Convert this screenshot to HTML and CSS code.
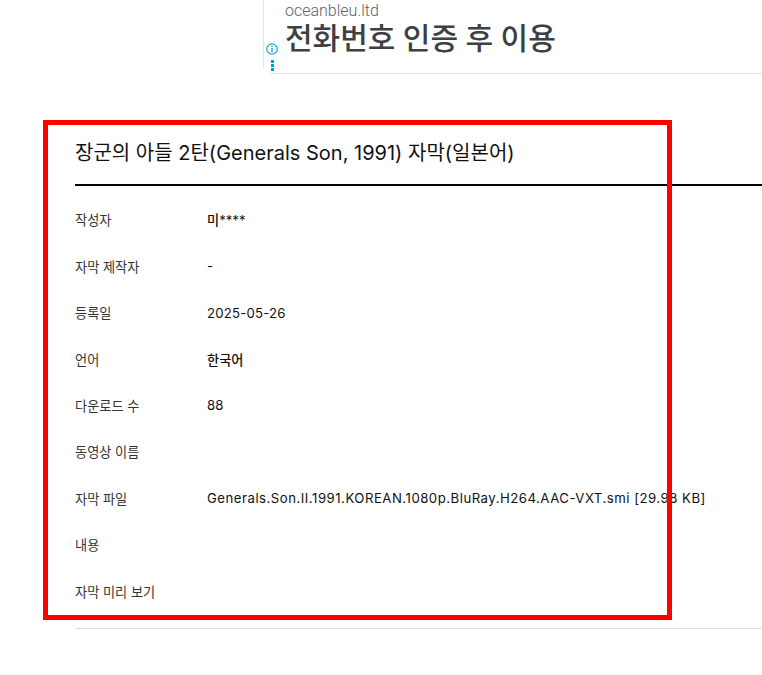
FILE: index.html
```html
<!DOCTYPE html>
<html lang="ko">

<head>
  <meta charset="UTF-8">
  <meta name="viewport" content="width=device-width, initial-scale=1.0">
  <title>자막</title>
  <link rel="stylesheet" href="styles.css">
</head>

<body>
  <!-- 광고 -->
  <div class="ad">
    <div class="ad-side">
      <svg class="ad-info" width="12" height="12" viewBox="0 0 12 12">
        <circle cx="6" cy="6" r="5.2" fill="none" stroke="#00aecd" stroke-width="1.2"/>
        <rect x="5.3" y="5" width="1.4" height="4" fill="#00aecd"/>
        <rect x="5.3" y="2.7" width="1.4" height="1.3" fill="#00aecd"/>
      </svg>
      <div class="ad-dots"><i></i><i></i><i></i></div>
    </div>
    <div class="ad-text">
      <div class="ad-domain">oceanbleu.ltd</div>
      <div class="ad-title">전화번호 인증 후 이용</div>
    </div>
  </div>

  <!-- 자막 정보 -->
  <div class="detail">
    <h1 class="detail-title">장군의 아들 2탄(Generals Son, 1991) 자막(일본어)</h1>
    <div class="rows">
      <div class="row"><div class="label">작성자</div><div class="value"><span class="medium">미</span>****</div></div>
      <div class="row"><div class="label">자막 제작자</div><div class="value">-</div></div>
      <div class="row"><div class="label">등록일</div><div class="value date">2025-05-26</div></div>
      <div class="row"><div class="label">언어</div><div class="value medium">한국어</div></div>
      <div class="row"><div class="label">다운로드 수</div><div class="value">88</div></div>
      <div class="row"><div class="label">동영상 이름</div><div class="value"></div></div>
      <div class="row"><div class="label">자막 파일</div><div class="value file">Generals.Son.II.1991.KOREAN.1080p.BluRay.H264.AAC-VXT.smi [29.98 KB]</div></div>
      <div class="row"><div class="label">내용</div><div class="value"></div></div>
      <div class="row"><div class="label">자막 미리 보기</div><div class="value"></div></div>
    </div>
  </div>

  <div class="highlight"></div>
</body>

</html>
```

FILE: styles.css
```css
html,
body {
  margin: 0;
  padding: 0;
  overflow: hidden;
  height: 675px;
  background-color: #fff;
}

body {
  font-family: Inter, "Noto Sans CJK KR", sans-serif;
  color: #222;
}

.ad {
  display: flex;
  height: 74px;
  margin-left: 263px;
}

.ad-side {
  flex: none;
  width: 7px;
  height: 68px;
  border-left: 1px solid #e4e4e4;
  box-sizing: border-box;
  padding: 43px 0 0 2px;
}

.ad-info {
  display: block;
}

.ad-dots {
  margin: 5px 0 0 5px;
}

.ad-dots i {
  display: block;
  width: 3px;
  height: 3px;
  margin-bottom: 1px;
  background-color: #00a0c4;
}

.ad-text {
  flex: 1;
  padding-left: 15px;
  border-bottom: 1px solid #e4e4e4;
}

.ad-domain {
  font-family: Roboto, "Liberation Sans", sans-serif;
  font-size: 16px;
  line-height: 21px;
  font-weight: 300;
  color: #5f6368;
}

.ad-title {
  font-family: Roboto, "Noto Sans CJK KR", sans-serif;
  font-size: 30px;
  line-height: 35px;
  font-weight: 500;
  color: #3c4043;
}

.detail {
  margin: 63px 0 0 75px;
  width: 700px;
  border-bottom: 1px solid #ddd;
  padding-bottom: 14px;
}

.detail-title {
  margin: 0;
  height: 46px;
  padding-top: 1px;
  border-bottom: 2px solid #000;
  font-size: 20px;
  line-height: 30px;
  font-weight: 400;
  color: #111;
}

.rows {
  padding-top: 10.7px;
}

.row {
  display: flex;
  height: 46.4px;
  align-items: center;
  font-size: 13.2px;
}

.label {
  width: 132px;
  flex: none;
  color: #333;
}

.value {
  color: #111;
  white-space: nowrap;
}

.date {
  letter-spacing: 0.2px;
}

.file {
  letter-spacing: 0.5px;
}

.medium {
  font-weight: 500;
}

/* 빨간 표시 상자 */
.highlight {
  position: absolute;
  left: 43px;
  top: 120px;
  width: 619px;
  height: 490px;
  border: 5px solid #f00;
}
```
